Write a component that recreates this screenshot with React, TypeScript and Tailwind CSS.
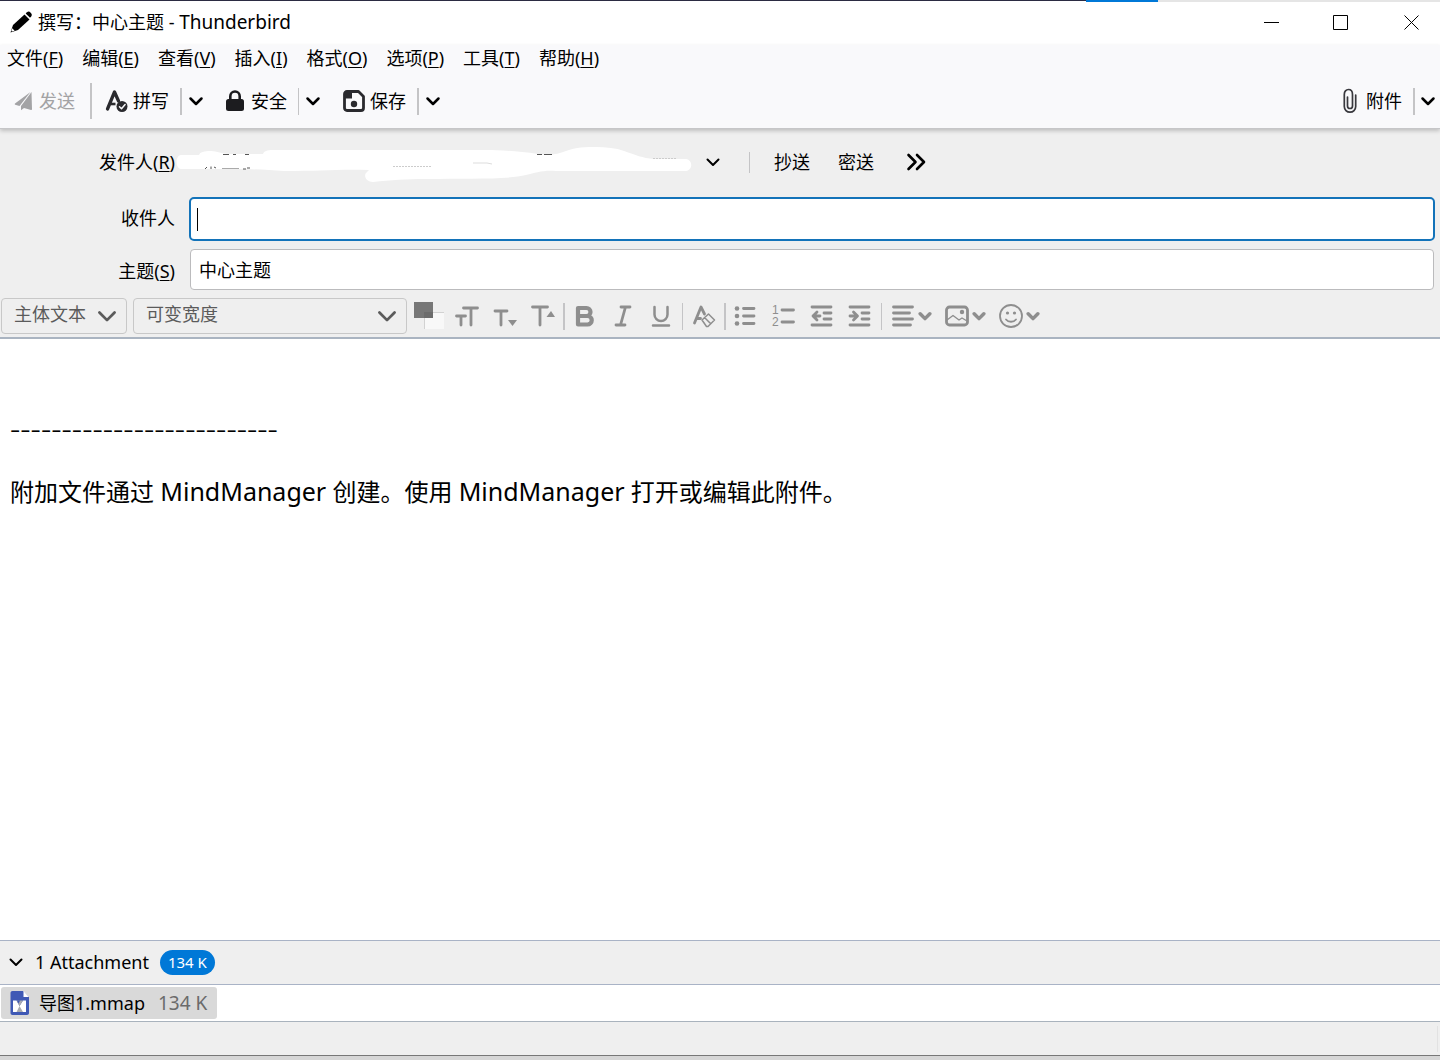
import React from 'react';
import clsx from 'clsx';

const menus = [
  { label: '文件', accessKey: 'F' },
  { label: '编辑', accessKey: 'E' },
  { label: '查看', accessKey: 'V' },
  { label: '插入', accessKey: 'I' },
  { label: '格式', accessKey: 'O' },
  { label: '选项', accessKey: 'P' },
  { label: '工具', accessKey: 'T' },
  { label: '帮助', accessKey: 'H' },
];

interface IconProps {
  className?: string;
}

function Chevron({ className }: IconProps) {
  return (
    <svg viewBox="0 0 16 16" className={clsx('shrink-0', className)} fill="none" stroke="currentColor" strokeLinecap="round" strokeLinejoin="round">
      <path d="M2.500 5.500 8 11l5.500-5.500" />
    </svg>
  );
}

function PencilIcon() {
  return (
    <svg viewBox="0 0 24 24" className="h-6 w-6 shrink-0" fill="#000">
      <path d="M1.500 22.500 4 15 15.500 4.500l5 5L9 20z" />
      <path d="m16.700 3.400 1.300-1.200c1.200-1 2.500-.7 3.700.5s1.500 2.500.5 3.700l-1.200 1.300z" />
      <path d="m3.200 18.300 2.500 2.500-2.700.8-.7-.7z" fill="#fff" />
    </svg>
  );
}

function SendIcon() {
  return (
    <svg viewBox="0 0 20 20" className="h-5 w-5" fill="#a3a3a5">
      <path d="M16.500 1 1 12.500c-.4.400-.3 1 .2 1.200L5.500 15z" />
      <path d="M17.500 1 7 15v4.300L10 17l7 2c.7.100 1-.2 1-.8z" />
    </svg>
  );
}

function SpellIcon() {
  return (
    <svg viewBox="0 0 24 24" className="h-6 w-6" fill="none" stroke="#2a2a2e">
      <path d="M2.500 20 9.500 3l4 9" strokeWidth="3.300" strokeLinecap="round" strokeLinejoin="round" />
      <path d="M5.500 15h5" strokeWidth="2.600" />
      <circle cx="17" cy="17.500" r="5.500" fill="#2a2a2e" stroke="none" />
      <path d="m14.500 17.700 2 2 3.600-4.200" stroke="#f9f9fb" strokeWidth="1.500" strokeLinecap="round" strokeLinejoin="round" />
    </svg>
  );
}

function LockIcon() {
  return (
    <svg viewBox="0 0 20 24" className="h-6 w-5" fill="none">
      <path d="M5.300 11V7.200a4.700 4.700 0 0 1 9.400 0V11" stroke="#1c1c1f" strokeWidth="2.600" />
      <rect x="1" y="10" width="18" height="12" rx="2.500" fill="#1c1c1f" />
    </svg>
  );
}

function SaveIcon() {
  return (
    <svg viewBox="0 0 22 22" className="h-[22px] w-[22px]" fill="none" stroke="#2a2a2e">
      <path d="M4 1.500h11.500l5 5V18a2.500 2.500 0 0 1-2.500 2.500H4A2.500 2.500 0 0 1 1.500 18V4A2.500 2.500 0 0 1 4 1.500z" strokeWidth="2.800" strokeLinejoin="round" />
      <path d="M2 2h7v6.500H2z" fill="#2a2a2e" stroke="none" />
      <circle cx="11" cy="14" r="3.200" fill="#2a2a2e" stroke="none" />
    </svg>
  );
}

function ClipIcon() {
  return (
    <svg viewBox="0 0 14 26" className="h-[26px] w-[14px]" fill="none" stroke="#38383d" strokeWidth="1.700" strokeLinecap="round">
      <path d="M4.500 9v9a2.500 2.500 0 0 0 5 0V6.500C9.500 3.500 8 1.500 5.500 1.500S1.300 3.500 1.300 6.500V18.500a5.700 5.700 0 0 0 11.400 0V7" />
    </svg>
  );
}

function Divider({ className }: IconProps) {
  return <span className={clsx('shrink-0 bg-[#c4c4c6]', className)} />;
}

interface ToolButtonProps {
  icon: React.ReactNode;
  label: string;
  className?: string;
}

function ToolButton({ icon, label, className }: ToolButtonProps) {
  return (
    <button type="button" className={clsx('flex h-9 items-center', className)}>
      {icon}
      <span>{label}</span>
    </button>
  );
}

function DropButton({ label, className = 'w-7' }: { label: string; className?: string }) {
  return (
    <button type="button" aria-label={label} className={clsx('flex h-9 items-center justify-center text-black', className)}>
      <Chevron className="h-4 w-4 stroke-[2.500]" />
    </button>
  );
}

interface FormatButtonProps {
  label: string;
  children: React.ReactNode;
}

function FormatButton({ label, children }: FormatButtonProps) {
  return (
    <button type="button" aria-label={label} className="flex h-9 w-[38px] shrink-0 items-center justify-center">
      <svg viewBox="0 0 24 24" className="h-6 w-6" fill="none" stroke="currentColor" strokeWidth="2.800" strokeLinecap="round" strokeLinejoin="round">
        {children}
      </svg>
    </button>
  );
}

function FormatMenuButton({ label, children }: FormatButtonProps) {
  return (
    <button type="button" aria-label={label} className="flex h-9 shrink-0 items-center gap-[3px]">
      <svg viewBox="0 0 24 24" className="h-6 w-6" fill="none" stroke="currentColor" strokeWidth="2.800" strokeLinecap="round" strokeLinejoin="round">
        {children}
      </svg>
      <Chevron className="h-[14px] w-[14px] stroke-[4]" />
    </button>
  );
}

function TitleBar() {
  return (
    <header className="flex h-[43px] items-center bg-white pb-[3px]">
      <div className="flex flex-1 items-center gap-[5px] pl-[9px]">
        <PencilIcon />
        <h1>
          撰写：中心主题 - <span className="text-[19px]">Thunderbird</span>
        </h1>
      </div>
      <div className="flex">
        <button type="button" aria-label="最小化" className="flex h-10 w-[70px] items-center justify-center">
          <svg viewBox="0 0 16 16" className="h-4 w-4" stroke="#000">
            <path d="M1 8.500h15" />
          </svg>
        </button>
        <button type="button" aria-label="最大化" className="flex h-10 w-[70px] items-center justify-center">
          <svg viewBox="0 0 16 16" className="h-4 w-4" fill="none" stroke="#000">
            <path d="M.5 1.500h14v14H.5z" />
          </svg>
        </button>
        <button type="button" aria-label="关闭" className="flex h-10 w-[64px] items-center justify-center pl-2">
          <svg viewBox="0 0 16 16" className="h-4 w-4" stroke="#000">
            <path d="m.5 1.500 14 14m0-14-14 14" />
          </svg>
        </button>
      </div>
    </header>
  );
}

function MenuBar() {
  return (
    <nav className="flex h-7 items-center gap-[19px] pb-[2px] pl-[7px]">
      {menus.map((menu) => (
        <button key={menu.accessKey} type="button">
          {menu.label}(<span className="underline underline-offset-2">{menu.accessKey}</span>)
        </button>
      ))}
    </nav>
  );
}

function Toolbar() {
  return (
    <div className="flex h-[55px] items-center pt-px">
      <ToolButton icon={<SendIcon />} label="发送" className="gap-[5px] pl-[14px] pr-[15px] text-[#a3a3a5]" />
      <Divider className="h-9 w-[2px]" />
      <ToolButton icon={<SpellIcon />} label="拼写" className="gap-1 pl-[13px] pr-[11px]" />
      <Divider className="h-[27px] w-[2px]" />
      <DropButton label="拼写选项" />
      <ToolButton icon={<LockIcon />} label="安全" className="gap-[6px] pl-[15px] pr-[11px]" />
      <Divider className="h-[27px] w-px" />
      <DropButton label="安全选项" />
      <ToolButton icon={<SaveIcon />} label="保存" className="gap-[5px] pl-4 pr-[11px]" />
      <Divider className="h-[27px] w-[2px]" />
      <DropButton label="保存选项" />
      <ToolButton icon={<ClipIcon />} label="附件" className="ml-auto gap-[9px] pr-[11px]" />
      <Divider className="h-[27px] w-[2px]" />
      <DropButton label="附件选项" className="w-[25px]" />
    </div>
  );
}

// White brush stroke that hides the sender's address
function SenderMask() {
  return (
    <svg viewBox="0 0 520 40" className="pointer-events-none absolute -left-[14px] top-[2px] h-10 w-[520px]">
      <path
        fill="#fff"
        d="M5 9h18c1-3 5-4 12-4 6 0 10 3 20 3h32c1-3 4-4 10-4h213c12 0 30 1 52 4 12 2 20 0 28-3 10-4 20-4 30-4s20 1 28 4c12 4 18 7 30 8h32c7 1 7 11 0 12H380c-14-1-20 2-30 4-20 5-60 3-100 4-20 0-35 1-53 3-8 0-9-7-7-9l3-3c-30-1-50 1-85 1-16-1-30-2-50-2H5c-6-1-6-13 0-14z"
      />
      <g fill="none" stroke="#555">
        <path d="M47 8.500h6M57 8.500h3M69 8.500h4M361 8.500h5M368 8.500h8" />
        <path d="m29 23 2-2M35 23v-2.500M38 21l2 1M67 23h3M71 22h3" />
        <path d="M46 22.500h17" stroke="#aaa" />
        <path d="M217 20.500h38M477 12.500h24" stroke="#ccc" strokeDasharray="2 1" />
        <path d="M297 17h14l5 1" stroke="#ddd" />
      </g>
    </svg>
  );
}

function AddressFields() {
  return (
    <div className="grid grid-cols-[175px_1fr] gap-x-[15px] pr-[6px]">
      <label htmlFor="sender" className="flex h-16 items-center justify-end pb-[6px]">
        发件人(<span className="underline underline-offset-2">R</span>)
      </label>
      <div className="flex h-16 items-center pb-[6px]">
        <div className="relative w-[533px]">
          <select id="sender" className="block h-9 w-full appearance-none bg-transparent" />
          <SenderMask />
          <Chevron className="pointer-events-none absolute right-[2px] top-[10px] h-4 w-4 stroke-2" />
        </div>
        <Divider className="ml-[26px] mr-6 h-[21px] w-px" />
        <button type="button">抄送</button>
        <button type="button" className="ml-7">密送</button>
        <button type="button" aria-label="更多收件人字段" className="ml-8">
          <svg viewBox="0 0 20 20" className="h-5 w-5" fill="none" stroke="#000" strokeWidth="2.600" strokeLinecap="round" strokeLinejoin="round">
            <path d="m2.500 3 7 7-7 7M11 3l7 7-7 7" />
          </svg>
        </button>
      </div>

      <label htmlFor="to" className="flex h-[56px] items-center justify-end pb-[14px]">收件人</label>
      <div className="relative h-[56px]">
        <input id="to" type="text" className="-mx-px h-11 w-[calc(100%+2px)] rounded-[5px] border-2 border-[#1373b9] bg-white px-2 outline-none" />
        <span className="absolute left-[7px] top-[11px] h-[23px] w-px bg-black" />
      </div>

      <label htmlFor="subject" className="-mt-[5px] flex h-[42px] items-center justify-end pt-[3px]">
        主题(<span className="underline underline-offset-2">S</span>)
      </label>
      <input id="subject" type="text" defaultValue="中心主题" className="-mt-1 h-[41px] rounded-[4px] border border-[#bbbbbd] bg-white px-2 pb-[2px] outline-none" />
    </div>
  );
}

interface FormatSelectProps {
  label: string;
  value: string;
  className?: string;
}

function FormatSelect({ label, value, className }: FormatSelectProps) {
  return (
    <div className={clsx('relative shrink-0 text-[#5b5b5b]', className)}>
      <select aria-label={label} className="block h-9 w-full appearance-none rounded-[4px] border border-[#c8c8c8] bg-transparent pb-1 pl-3">
        <option>{value}</option>
      </select>
      <Chevron className="pointer-events-none absolute right-[9px] top-[7px] h-[22px] w-[22px] stroke-2" />
    </div>
  );
}

function FormatBar() {
  return (
    <div className="flex h-[47px] items-center pl-px pt-[5px] text-[#8e8e8e]">
      <FormatSelect label="段落格式" value="主体文本" className="w-[126px]" />
      <FormatSelect label="字体" value="可变宽度" className="ml-[6px] w-[274px]" />
      <button type="button" aria-label="文字颜色" className="ml-[6px] mr-1 shrink-0">
        <svg viewBox="0 0 31 28" className="h-7 w-[31px]">
          <path d="M11 11h20v16H11z" fill="#f8f8f8" />
          <path d="M11.500 27V10.500H31" fill="none" stroke="#d2d2d2" />
          <path d="M1 0h19v16H1z" fill="#777" />
          <path d="M11 10h9v6h-9z" fill="#6c6c6c" />
        </svg>
      </button>
      <FormatButton label="字体大小">
        <path d="M8.500 4H22.500M16 4v17M1.500 12H10.500M6 12v9" />
      </FormatButton>
      <FormatButton label="缩小字号">
        <path d="M2 7h12M8 7v14" />
        <path d="M15 16h9l-4.500 6z" fill="currentColor" stroke="none" />
      </FormatButton>
      <FormatButton label="放大字号">
        <path d="M1.500 3h15M9 3v18" />
        <path d="M15.500 13h8.500L20 7z" fill="currentColor" stroke="none" />
      </FormatButton>
      <Divider className="mx-px h-[27px] w-[2px]" />
      <FormatButton label="粗体">
        <path d="M5 4h8.500a4 4 0 0 1 0 8H5zM5 12h9.500a4 4 0 0 1 0 8.500H5z" strokeWidth="4.200" />
      </FormatButton>
      <FormatButton label="斜体">
        <path d="M10 3h9M5 21h9M14.500 3l-5 18" />
      </FormatButton>
      <FormatButton label="下划线">
        <path d="M5.500 3v7.500a6.500 6.500 0 0 0 13 0V3M4 21.500h16" strokeWidth="2.500" />
      </FormatButton>
      <Divider className="mx-[2px] h-[27px] w-px" />
      <FormatButton label="清除格式">
        <path d="M2.500 19 9 3l3.500 7M5.500 14.500h3" />
        <path d="m10 16 6.500-6 6 6-6.500 6.500h-1.500zM12.500 13.500l6 6" strokeWidth="1.500" />
      </FormatButton>
      <Divider className="ml-px h-[27px] w-[2px]" />
      <FormatButton label="项目符号列表">
        <path d="M10.500 4.500H21M10.500 12H21M10.500 19.500H21" />
        <g fill="currentColor" stroke="none">
          <circle cx="4" cy="4.500" r="2.300" />
          <circle cx="4" cy="12" r="2.300" />
          <circle cx="4" cy="19.500" r="2.300" />
        </g>
      </FormatButton>
      <button type="button" aria-label="编号列表" className="flex h-9 w-[38px] shrink-0 items-center justify-center">
        <svg viewBox="0 0 30 32" className="h-8 w-[30px]" fill="currentColor">
          <path d="M14 10H25.500M14 22H25.500" stroke="currentColor" strokeWidth="2.800" strokeLinecap="round" />
          <g fontSize="12" fontFamily="Liberation Sans, sans-serif">
            <text x="4" y="14">1</text>
            <text x="4" y="26">2</text>
          </g>
        </svg>
      </button>
      <FormatButton label="减少缩进">
        <path d="M3 3h19M15 9h7M15 15h7M3 21h19M4 12h7M8 8l-4 4 4 4" />
      </FormatButton>
      <FormatButton label="增加缩进">
        <path d="M3 3h19M15 9h7M15 15h7M3 21h19M3 12h7M6.500 8l4 4-4 4" />
      </FormatButton>
      <Divider className="ml-[3px] mr-[9px] h-[27px] w-px" />
      <div className="flex items-center gap-[13px]">
        <FormatMenuButton label="对齐方式">
          <path d="M2.500 3h19M2.500 9h16M2.500 15h19M2.500 21h17" />
        </FormatMenuButton>
        <FormatMenuButton label="插入">
          <rect x="1.500" y="3" width="21" height="18" rx="3" />
          <path d="m2 16 6-4.500 6 4.500 3-2 5 3" strokeWidth="1.300" />
          <circle cx="17" cy="8" r="2.200" fill="currentColor" stroke="none" />
        </FormatMenuButton>
        <FormatMenuButton label="插入表情">
          <circle cx="12" cy="12" r="11" strokeWidth="1.800" />
          <path d="M7 15.500c2.500 3 7.500 3 10 0" strokeWidth="1.800" />
          <g fill="currentColor" stroke="none">
            <circle cx="8.500" cy="9" r="1.600" />
            <circle cx="15.500" cy="9" r="1.600" />
          </g>
        </FormatMenuButton>
      </div>
    </div>
  );
}

function AttachmentPane() {
  return (
    <section>
      <div className="flex h-[44px] items-center border-t border-[#a9b3c6] bg-[#efefef] pb-px pl-2">
        <button type="button" aria-label="折叠附件" className="mr-[11px]">
          <Chevron className="h-4 w-4 stroke-2" />
        </button>
        <span>1 Attachment</span>
        <span className="ml-[11px] flex h-[25px] items-center rounded-full bg-[#0078d7] px-2 text-[15px] text-white">134 K</span>
      </div>
      <div className="flex h-[37px] items-center border-t border-[#a9b3c6] bg-white">
        <button type="button" className="ml-px flex h-8 items-center rounded-[3px] bg-[#d9d9d9] pl-2 pr-[10px]">
          <svg viewBox="0 0 20 24" className="mr-[10px] h-6 w-5">
            <path d="M3.500 0H14l6 6v16c0 1.200-.8 2-2 2H3.500c-1.200 0-2-.8-2-2V2c0-1.200.8-2 2-2z" fill="#3f59b5" />
            <path d="M14.500 0 20 6h-5.500z" fill="#fff" />
            <path d="M4 9.500h3.500L10.500 15l3.500-5.500h3V21H4z" fill="#fff" />
            <path d="M7.500 9.500H14L10.500 15zM10.500 15l3.500 6H7.500z" fill="#a9abb0" />
            <path d="M8 9.500h3L9.500 12.500z" fill="#3f59b5" />
          </svg>
          <span>导图1.mmap</span>
          <span className="ml-[13px] text-[19px] text-[#6b6b6b]">134 K</span>
        </button>
      </div>
    </section>
  );
}

export default function App() {
  return (
    <div className="flex min-h-screen flex-col bg-white font-['Noto_Sans','Noto_Sans_CJK_SC',sans-serif] text-[18px] leading-6 text-black">
      <div className="flex h-[2px] shrink-0">
        <span className="h-px w-[1086px] bg-[#2b2b42]" />
        <span className="w-[72px] bg-[#0078d7]" />
        <span className="flex-1 bg-[#e5e5e5]" />
      </div>
      <TitleBar />
      <div className="z-10 border-b border-[#c6c6c8] bg-[#f9f9fb] shadow-[0_2px_4px_rgba(0,0,0,0.2)]">
        <MenuBar />
        <Toolbar />
      </div>
      <div className="border-b-2 border-[#aab4c1] bg-[#efefef] pt-1">
        <AddressFields />
        <FormatBar />
      </div>
      <main className="flex-1 px-[10px] pt-[74px] text-[24px]" contentEditable suppressContentEditableWarning>
        <p className="text-[32px] font-light leading-[30px]">--------------------------</p>
        <p className="mt-8 leading-8">
          附加文件通过 <span className="text-[25px]">MindManager</span> 创建。使用 <span className="text-[25px]">MindManager</span> 打开或编辑此附件。
        </p>
      </main>
      <AttachmentPane />
      <footer className="flex h-[34px] items-center justify-end border-t border-[#a9b3bd] bg-[#efefef] pr-[2px]">
        <span className="h-[26px] w-px bg-[#e2e2e2]" />
      </footer>
      <div className="h-[5px] border-t border-[#777] bg-[#d6d6d6]" />
    </div>
  );
}
